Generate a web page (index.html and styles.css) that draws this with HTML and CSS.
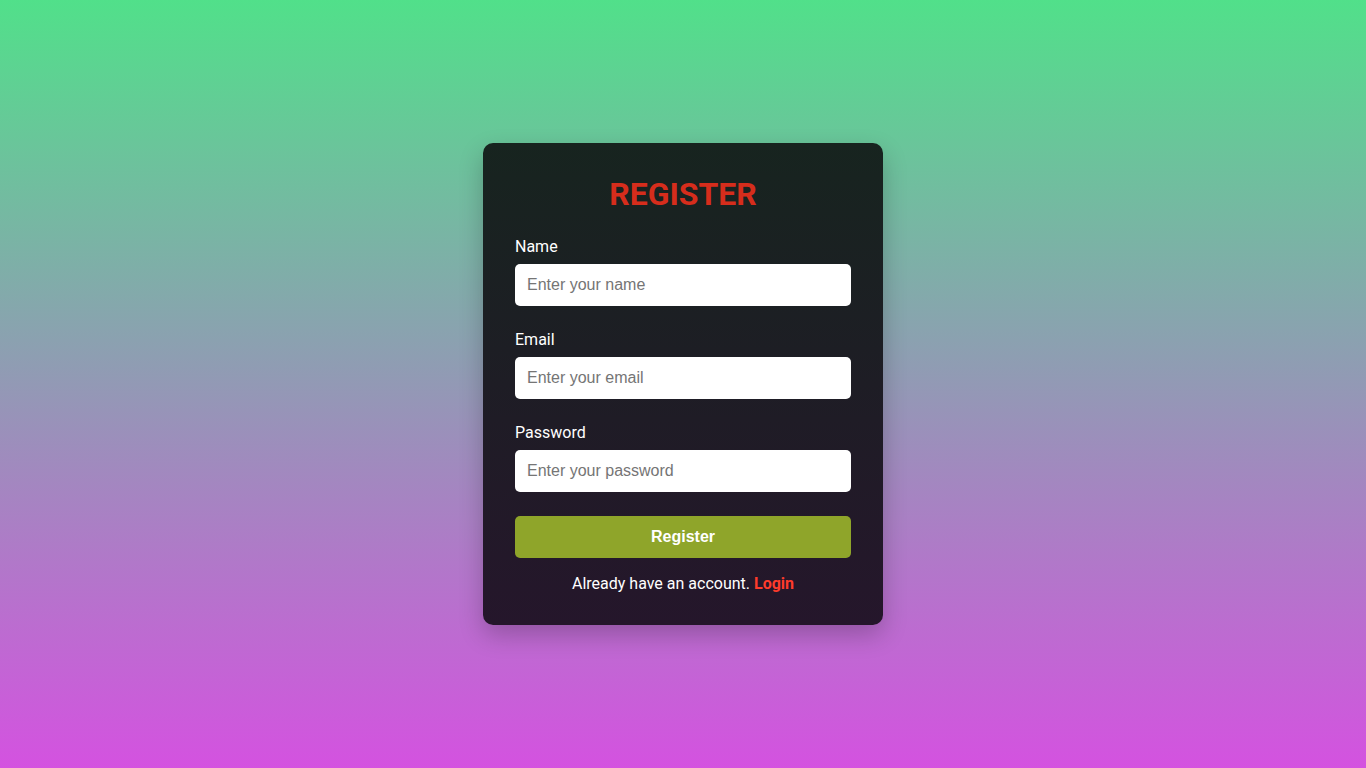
FILE: index.html
```html
<!DOCTYPE html>
<html lang="en">
<head>
<meta charset="UTF-8">
<title>Register</title>
<link rel="stylesheet" href="styles.css">
</head>
<body>
<main class="page">
  <form class="card">
    <h2 class="title">REGISTER</h2>
    <div class="field">
      <label class="label" for="name">Name</label>
      <input class="input" id="name" type="text" placeholder="Enter your name">
    </div>
    <div class="field">
      <label class="label" for="email">Email</label>
      <input class="input" id="email" type="email" placeholder="Enter your email">
    </div>
    <div class="field">
      <label class="label" for="password">Password</label>
      <input class="input" id="password" type="password" placeholder="Enter your password">
    </div>
    <button class="btn" type="button">Register</button>
    <p class="footer">Already have an account. <a class="link" href="#">Login</a></p>
  </form>
</main>
</body>
</html>
```

FILE: styles.css
```css
* { box-sizing: border-box; }
html, body { margin: 0; padding: 0; height: 100%; }
body {
  font-family: Roboto, "Liberation Sans", Arial, sans-serif;
  background: linear-gradient(to bottom, #51e08a 0%, #d452e0 100%);
}
.page {
  min-height: 100vh;
  display: flex;
  align-items: center;
  justify-content: center;
}
.card {
  width: 400px;
  padding: 32px;
  border-radius: 10px;
  background: linear-gradient(to bottom, #17241f 0%, #25162b 100%);
  box-shadow: 0 10px 25px rgba(0, 0, 0, 0.22);
  display: flex;
  flex-direction: column;
}
.title {
  margin: 0 0 23px;
  padding-top: 1px;
  font-size: 32px;
  font-weight: 700;
  line-height: 37.5px;
  text-align: center;
  color: #d62d1c;
}
.field {
  display: flex;
  flex-direction: column;
  gap: 8px;
  margin-bottom: 24px;
}
.label {
  color: #ffffff;
  font-size: 16px;
  line-height: 19px;
}
.input {
  height: 42px;
  padding: 0 12px;
  border: none;
  border-radius: 5px;
  background: #ffffff;
  font-family: "Liberation Sans", Arial, sans-serif;
  font-size: 16px;
  color: #222;
  outline: none;
}
.input::placeholder { color: #757575; }
.btn {
  height: 42px;
  border: none;
  border-radius: 5px;
  background: #8fa52a;
  color: #ffffff;
  font-family: "Liberation Sans", Arial, sans-serif;
  font-size: 16px;
  font-weight: 700;
  cursor: pointer;
}
.footer {
  margin: 16px 0 0;
  text-align: center;
  color: #ffffff;
  font-size: 16px;
  line-height: 19px;
}
.link {
  color: #ff3b2b;
  font-weight: 700;
  text-decoration: none;
}
```
